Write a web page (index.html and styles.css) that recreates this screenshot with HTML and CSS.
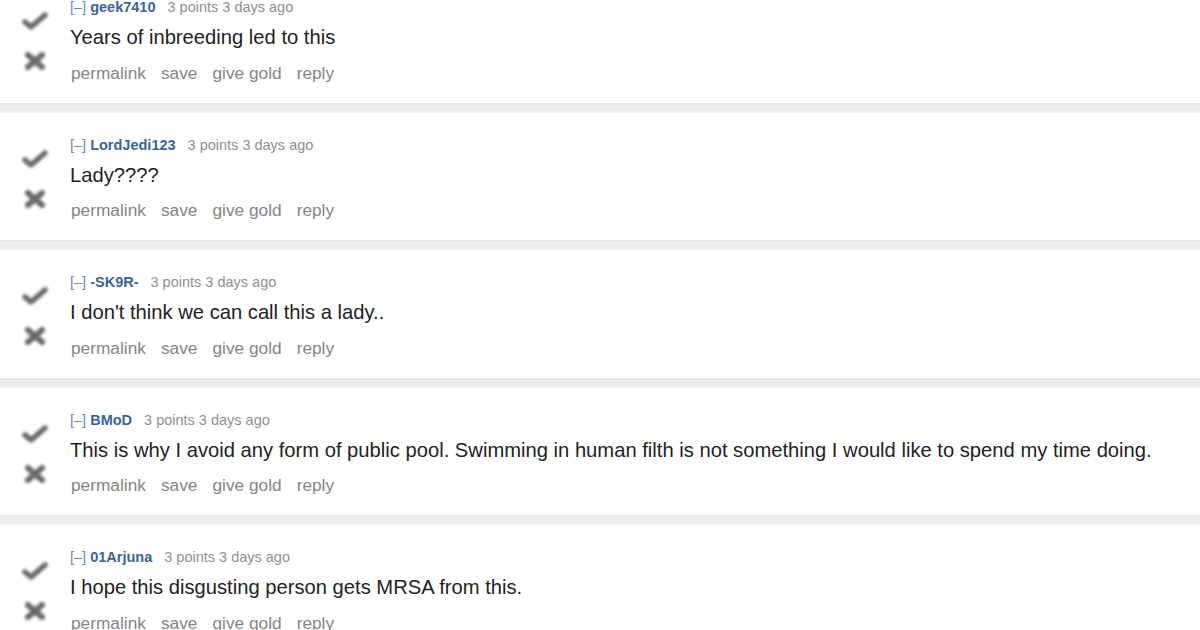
FILE: index.html
```html
<!DOCTYPE html>
<html lang="en">
<head>
    <meta charset="UTF-8">
    <title>comments</title>
    <link rel="stylesheet" href="styles.css">
</head>
<body>
<div class="comments">
    <div class="comment">
        <div class="vote">
            <svg class="up" viewBox="0 0 26 20"><path d="M3 11 L9 16 L23 4"/></svg>
            <svg class="down" viewBox="0 0 24 20"><path d="M5 4 L19 16 M19 4 L5 16"/></svg>
        </div>
        <div class="entry">
            <div class="tagline"><span class="expand">[–]</span> <span class="author">geek7410</span><span class="score">3 points 3 days ago</span></div>
            <div class="md">Years of inbreeding led to this</div>
            <div class="buttons"><span>permalink</span><span>save</span><span>give gold</span><span>reply</span></div>
        </div>
    </div>
    <div class="sep"></div>
    <div class="comment">
        <div class="vote">
            <svg class="up" viewBox="0 0 26 20"><path d="M3 11 L9 16 L23 4"/></svg>
            <svg class="down" viewBox="0 0 24 20"><path d="M5 4 L19 16 M19 4 L5 16"/></svg>
        </div>
        <div class="entry">
            <div class="tagline"><span class="expand">[–]</span> <span class="author">LordJedi123</span><span class="score">3 points 3 days ago</span></div>
            <div class="md">Lady????</div>
            <div class="buttons"><span>permalink</span><span>save</span><span>give gold</span><span>reply</span></div>
        </div>
    </div>
    <div class="sep"></div>
    <div class="comment">
        <div class="vote">
            <svg class="up" viewBox="0 0 26 20"><path d="M3 11 L9 16 L23 4"/></svg>
            <svg class="down" viewBox="0 0 24 20"><path d="M5 4 L19 16 M19 4 L5 16"/></svg>
        </div>
        <div class="entry">
            <div class="tagline"><span class="expand">[–]</span> <span class="author">-SK9R-</span><span class="score">3 points 3 days ago</span></div>
            <div class="md">I don't think we can call this a lady..</div>
            <div class="buttons"><span>permalink</span><span>save</span><span>give gold</span><span>reply</span></div>
        </div>
    </div>
    <div class="sep"></div>
    <div class="comment">
        <div class="vote">
            <svg class="up" viewBox="0 0 26 20"><path d="M3 11 L9 16 L23 4"/></svg>
            <svg class="down" viewBox="0 0 24 20"><path d="M5 4 L19 16 M19 4 L5 16"/></svg>
        </div>
        <div class="entry">
            <div class="tagline"><span class="expand">[–]</span> <span class="author">BMoD</span><span class="score">3 points 3 days ago</span></div>
            <div class="md">This is why I avoid any form of public pool. Swimming in human filth is not something I would like to spend my time doing.</div>
            <div class="buttons"><span>permalink</span><span>save</span><span>give gold</span><span>reply</span></div>
        </div>
    </div>
    <div class="sep"></div>
    <div class="comment">
        <div class="vote">
            <svg class="up" viewBox="0 0 26 20"><path d="M3 11 L9 16 L23 4"/></svg>
            <svg class="down" viewBox="0 0 24 20"><path d="M5 4 L19 16 M19 4 L5 16"/></svg>
        </div>
        <div class="entry">
            <div class="tagline"><span class="expand">[–]</span> <span class="author">01Arjuna</span><span class="score">3 points 3 days ago</span></div>
            <div class="md">I hope this disgusting person gets MRSA from this.</div>
            <div class="buttons"><span>permalink</span><span>save</span><span>give gold</span><span>reply</span></div>
        </div>
    </div>
</div>
</body>
</html>
```
FILE: styles.css
```css
body {
    margin: 0;
    background: #ffffff;
    font-family: "Liberation Sans", Arial, sans-serif;
    overflow: hidden;
}
.comments {
    margin-top: -25px;
}
.comment {
    display: flex;
    padding: 22px 0 16px 0;
}
.vote {
    width: 70px;
    display: flex;
    flex-direction: column;
    align-items: center;
    padding-top: 14px;
    gap: 20px;
    filter: blur(1.4px);
}
.vote svg {
    width: 28px;
    height: 20px;
    fill: none;
    stroke: #6a6a6a;
    stroke-linecap: round;
    stroke-linejoin: round;
}
.vote .up {
    stroke-width: 5.5;
}
.vote .down {
    stroke-width: 6;
}
.tagline {
    font-size: 14.5px;
    line-height: 20px;
    color: #8f8f8f;
}
.expand {
    color: #6d8bb3;
}
.author {
    color: #3b6496;
    font-weight: bold;
    margin-right: 12px;
}
.md {
    margin-top: 6px;
    font-size: 20.2px;
    line-height: 28px;
    color: #222222;
}
.buttons {
    margin-top: 7.5px;
    display: flex;
    gap: 15px;
    font-size: 17.3px;
    line-height: 28px;
    color: #858585;
    padding-left: 1px;
}
.sep {
    height: 10px;
    background: linear-gradient(#e4e4e4, #efefef 30%, #ececec 70%, #f4f4f4);
}
```
